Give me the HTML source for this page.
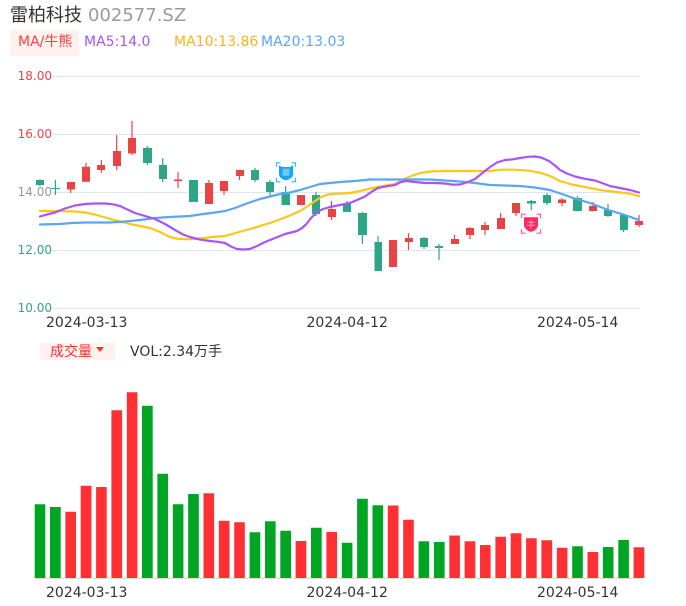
<!DOCTYPE html>
<html lang="zh">
<head>
<meta charset="utf-8">
<style>
html,body{margin:0;padding:0;background:#fff;width:686px;height:606px;overflow:hidden}
body{position:relative;font-family:"DejaVu Sans","WenQuanYi Zen Hei",sans-serif}
.t{position:absolute;white-space:nowrap;line-height:1}
.b{position:absolute}
svg{position:absolute;left:0;top:0}
</style>
</head>
<body>
<svg width="686" height="606" viewBox="0 0 686 606">
<g stroke="#E0E6F1" stroke-width="1">
<path d="M52 76.500H640M52 134.500H640M52 192.500H640M52 250.500H640M52 308.500H640"/>
</g>
<!-- wicks -->
<path fill="none" stroke="#2CA686" stroke-width="1.2" d="M40 179V186M55.400 180V195M147.400 146V165M162.700 158V182M193.500 180V202M255 168V182M270 180V196M285.600 186V205M316 192V216M347 201V212M362.400 212V244M378 236V271M424 237V249M439 244V260M531.300 200V210M547 193V205M577.500 196V211M608 204V217M623.500 215V232"/>
<path fill="none" stroke="#E94343" stroke-width="1.2" d="M70.700 182V193M86 163V182M101.400 160V173M116.700 135V170M132 121V155M178 172V188M209 180V204M224 181V195M239.500 170V180M301 195V205M331.500 201V220M393 240V267M408.500 233V250M454.500 235V244M470 227V239M485 222V235M500.600 213V229M516 203V216M562 198V206M593 202V211M639 215V227"/>
<!-- bodies -->
<path fill="#2CA686" d="M36 180H44V185H36ZM51 188H60V189H51ZM143 148H152V163H143ZM159 165H167V179H159ZM189 180H198V202H189ZM251 170H259V180H251ZM266 182H274V192H266ZM281.500 192H290V205H281.500ZM312 195H320V214H312ZM343 203H351V212H343ZM358 213H367V235H358ZM374.500 242H382V271H374.500ZM420 238H428V247H420ZM435 246H443V248H435ZM527 201H536V203.500H527ZM543 195H551V203H543ZM573 198H582V211H573ZM604 210H612V216H604ZM620 215H628V230H620Z"/>
<path fill="#E94343" d="M67 182H75V189.500H67ZM82 166.700H90V181.700H82ZM97 165H105V170H97ZM113 151H121V166H113ZM128 138H136V153.500H128ZM174 179.500H182V181H174ZM205 183H213V204H205ZM220 181H228V191H220ZM236 170H244V176H236ZM297 195H305V205H297ZM328 209H336V217H328ZM389 240H397V267H389ZM405 238H413V242H405ZM451 239H459V244H451ZM466 228H474V235H466ZM481 225H489V230H481ZM497 218H505V229H497ZM512 203H520V213H512ZM558 199.500H566V203H558ZM589 206H597V211H589ZM635 221H643V225H635Z"/>
<!-- MAs -->
<g fill="none" stroke-width="2.2" stroke-linejoin="round" stroke-linecap="round">
<polyline stroke="#FFC61A" points="40,211 58,211 75,211.500 85,212.500 95,214.500 107,218 120,221.500 135,225 150,228 160,232 170,237 178,238.800 187,239.300 200,238.500 212,237 225,236 237,232.500 250,229 270,223 285,217.500 300,211 308,206 315,201 322,196.500 330,194 350,193 360,191 370,188.500 383,186 395,184 403,179.500 410,176.500 420,173 430,171.500 445,171 460,171 475,171 490,171 500,169.700 515,169.700 530,170.800 540,172.700 550,176 560,181 572,184.500 590,188 603,190.500 617,192 630,193.700 639,196"/>
<polyline stroke="#5BA5F5" points="40,224.500 60,224 72,223 85,222.500 100,222.500 110,222.500 125,221.500 140,220 155,218 170,217 190,216 203,214 215,212.500 225,211 235,208 248,203 260,199 270,196.500 280,194 290,192.500 300,190 310,187 320,184 330,183 340,182 355,181 370,179.500 385,179.500 400,179.500 415,179.500 430,179.500 445,180.500 460,181.500 475,183 490,185 505,185.500 520,186 535,187.500 550,190 562,194 573,198 590,203 607,209.500 625,215 639,220"/>
<polyline stroke="#A855F7" points="40,216.500 47,214.500 55,212.500 65,208.500 75,205.500 85,204 95,203.500 105,203.500 113,204.300 120,206 128,209.800 135,213 145,216 155,219 165,224 175,230 183,234.500 190,237 200,239.500 210,241 218,241.800 225,243 231,246.500 237,249 243,249.500 250,249 257,246 265,242 275,238 285,234 293,232 297,231 302,228 306,224.500 311,218 317,212 323,209 330,207 340,205 350,203 357,200 365,196.500 372,191.500 378,188 385,186.500 395,185 401,182 406,181 415,182 425,183 435,183 445,183.500 453,184.700 460,184.500 468,182 475,179 483,172.500 490,167 497,162.500 505,160 513,159.300 520,158 528,156.800 535,156.500 541,157.500 549,161 555,165.500 560,170 567,173.500 575,176.500 585,178.800 595,180.500 602,183 610,186 620,188 630,190 639,192.500"/>
</g>
<!-- markers -->
<g transform="translate(286,172.300)">
<path fill="none" stroke="#3DB2FF" stroke-width="1.200" d="M-9.500 -5.500V-9.500H-5.500M5.500 -9.500H9.500V-5.500M9.500 5.500V9.500H5.500M-5.500 9.500H-9.500V5.500"/>
<path fill="#12A5FF" d="M-7 -7L-4 -5.300H4L7 -7V2C7 5 3.500 7.500 0 8C-3.500 7.500 -7 5 -7 2Z"/>
<rect x="-3.500" y="-3.500" width="7" height="7" fill="#6CC8FF"/>
</g>
<g transform="translate(531,223.700)">
<path fill="none" stroke="#FF5C85" stroke-width="1.200" d="M-9.500 -5.500V-9.500H-5.500M5.500 -9.500H9.500V-5.500M9.500 5.500V9.500H5.500M-5.500 9.500H-9.500V5.500"/>
<path fill="#FF2A62" d="M-7 -6.500H7V1C7 4.500 3.500 7.500 0 8C-3.500 7.500 -7 4.500 -7 1Z"/>
<path fill="none" stroke="#FF9DB8" stroke-width="1" d="M-3.500 -1.500H3.500M-4 1.500H4M0 -4V4.500"/>
</g>
<!-- volume -->
<path d="M35 578.500H639" stroke="#DDDDDD" stroke-width="1"/>
<path fill="#00A523" d="M34.700 504.300H45.300V578H34.700ZM50 507H60.700V578H50ZM142 405.700H152.700V578H142ZM157.400 473.700H168V578H157.400ZM172.800 504.300H183.400V578H172.800ZM188.100 494H198.800V578H188.100ZM249.600 532.300H260.300V578H249.600ZM265 521.300H275.600V578H265ZM280.300 530.700H291V578H280.300ZM311 527.700H321.700V578H311ZM341.800 542.700H352.400V578H341.800ZM357.100 498.700H367.800V578H357.100ZM372.500 505.300H383.100V578H372.500ZM418.600 541.300H429.200V578H418.600ZM433.900 542H444.600V578H433.900ZM572.200 546.300H582.800V578H572.200ZM602.900 547H613.500V578H602.900ZM618.300 540H628.900V578H618.300Z"/>
<path fill="#FF3033" d="M65.400 511.700H76V578H65.400ZM80.700 485.700H91.400V578H80.700ZM96.100 487H106.700V578H96.100ZM111.400 410.300H122.100V578H111.400ZM126.800 392.300H137.400V578H126.800ZM203.500 493.300H214.100V578H203.500ZM218.800 520.700H229.500V578H218.800ZM234.200 522.300H244.800V578H234.200ZM295.600 541H306.300V578H295.600ZM326.400 532H337V578H326.400ZM387.800 505.500H398.500V578H387.800ZM403.200 519.700H413.800V578H403.200ZM449.300 535.500H459.900V578H449.300ZM464.600 541.300H475.300V578H464.600ZM480 545H490.600V578H480ZM495.400 536.700H506V578H495.400ZM510.700 533.300H521.400V578H510.700ZM526.100 538.300H536.700V578H526.100ZM541.400 540.300H552.100V578H541.400ZM556.800 547.700H567.400V578H556.800ZM587.500 552H598.200V578H587.500ZM633.600 547.300H644.300V578H633.600Z"/>
</svg>

<div class="t" style="left:10px;top:7px;font-size:18px;color:#333">雷柏科技</div>
<div class="t" style="left:88px;top:7px;font-size:18px;color:#999">002577.SZ</div>

<div class="b" style="left:10px;top:30px;width:69px;height:26px;background:#FFF2EE"></div>
<div class="t" style="left:18px;top:35px;font-size:14px;color:#FF4040">MA/牛熊</div>
<div class="t" style="left:84px;top:35px;font-size:14px;color:#A855F7">MA5:14.0</div>
<div class="t" style="left:174px;top:35px;font-size:14px;color:#FFB31A">MA10:13.86</div>
<div class="t" style="left:261px;top:35px;font-size:14px;color:#5BA5F5">MA20:13.03</div>

<div class="t" style="right:634px;top:70px;font-size:12px;color:#F0424B">18.00</div>
<div class="t" style="right:634px;top:128px;font-size:12px;color:#F0424B">16.00</div>
<div class="t" style="right:634px;top:186px;font-size:12px;color:#999">14.00</div>
<div class="t" style="right:634px;top:244px;font-size:12px;color:#2CA686">12.00</div>
<div class="t" style="right:634px;top:302px;font-size:12px;color:#2CA686">10.00</div>

<div class="t" style="left:46px;top:316px;font-size:14px;color:#333">2024-03-13</div>
<div class="t" style="left:306.500px;top:316px;font-size:14px;color:#333">2024-04-12</div>
<div class="t" style="left:537px;top:316px;font-size:14px;color:#333">2024-05-14</div>

<div class="b" style="left:40px;top:343px;width:75px;height:17px;background:#FFF2EE"></div>
<div class="t" style="left:50px;top:345px;font-size:14px;color:#FF3033">成交量</div>
<div class="b" style="left:96px;top:347px;width:0;height:0;border-left:4px solid transparent;border-right:4px solid transparent;border-top:5px solid #FF3033"></div>
<div class="t" style="left:130px;top:345px;font-size:14px;color:#333">VOL:2.34万手</div>

<div class="t" style="left:46px;top:586px;font-size:14px;color:#333">2024-03-13</div>
<div class="t" style="left:306.500px;top:586px;font-size:14px;color:#333">2024-04-12</div>
<div class="t" style="left:537px;top:586px;font-size:14px;color:#333">2024-05-14</div>
</body>
</html>
